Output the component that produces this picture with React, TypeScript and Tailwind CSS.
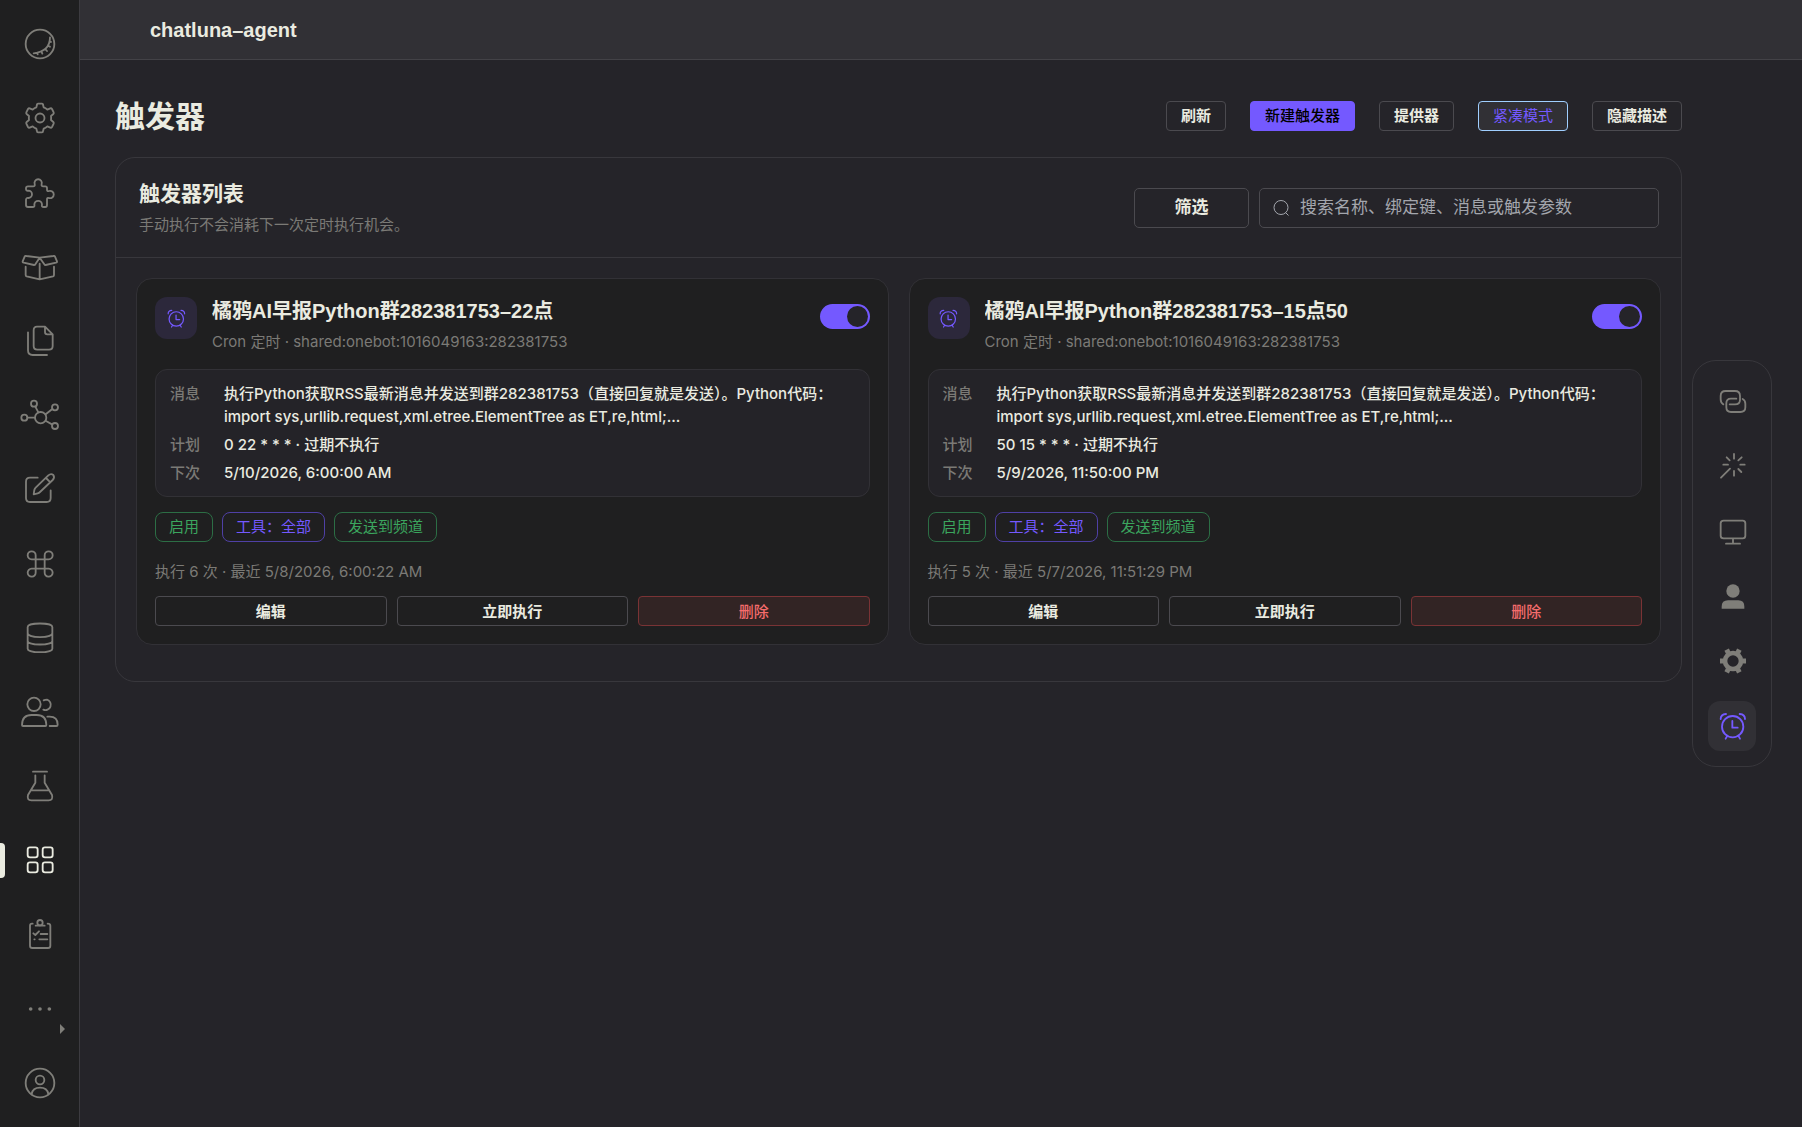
import React from "react";

type Glyph = { name: string; box: string; draw: React.ReactNode };

function Icon({ box, className, children }: { box: string; className: string; children: React.ReactNode }) {
  return (
    <svg
      viewBox={box}
      className={className}
      fill="none"
      stroke="currentColor"
      strokeWidth={5.5}
      strokeLinecap="round"
      strokeLinejoin="round"
      aria-hidden="true"
    >
      {children}
    </svg>
  );
}

const navItems: Glyph[] = [
  {
    name: "主题",
    box: "60 72 120 120",
    draw: (
      <>
        <circle cx="120" cy="132" r="43" />
        <path d="M150 112Q150 154 101 160M149 123L153 126M144 136L150 140M136 147L141 153M124 154L127 161M112 158L113 163" />
      </>
    ),
  },
  {
    name: "设置",
    box: "-60 -60 120 120",
    draw: (
      <>
        <circle r="13.5" />
        <path d="M-6-43H6Q9-43 9-40L11-32Q17-30 22-25L31-29Q34-30 36-27L41-17Q42-14 40-12L33-6Q34 0 33 6L40 12Q42 14 41 17L36 27Q34 30 31 29L22 25Q17 30 11 32L9 40Q9 43 6 43H-6Q-9 43-9 40L-11 32Q-17 30-22 25L-31 29Q-34 30-36 27L-41 17Q-42 14-40 12L-33 6Q-34 0-33-6L-40-12Q-42-14-41-17L-36-27Q-34-30-31-29L-22-25Q-17-30-11-32L-9-40Q-9-43-6-43Z" />
      </>
    ),
  },
  {
    name: "插件",
    box: "60 520 120 120",
    draw: (
      <path d="M84 560H99Q106 560 104 553A11 11 0 1 1 125 553Q123 560 130 560H136Q141 560 141 565V570Q141 576 147 574A11 11 0 1 1 147 595Q141 593 141 599V616Q141 622 136 622H131Q124 622 126 615A11 11 0 1 0 103 615Q105 622 98 622H84Q78 622 78 616V601Q78 594 85 595A11 11 0 1 0 85 573Q78 574 78 568V566Q78 560 84 560Z" />
    ),
  },
  {
    name: "市场",
    box: "60 741 120 120",
    draw: (
      <path d="M79 768L119 773L106 793Q105 795 102 795L71 788Q67 787 68 784L74 770Q75 767 79 768ZM160 768L119 773L133 793Q134 795 137 795L168 788Q172 787 171 784L165 770Q164 767 160 768ZM77 800V825Q77 828 80 829L119 838L159 829Q162 828 162 825V800M119 791V838" />
    ),
  },
  {
    name: "文件",
    box: "60 93 120 120",
    draw: (
      <path d="M111 110H135L158 133V168Q158 179 147 179H112Q101 179 101 168V121Q101 110 111 110ZM135 111V126Q135 133 142 133H157M84 127V181Q84 195 98 195H141" />
    ),
  },
  {
    name: "依赖",
    box: "60 315 120 120",
    draw: (
      <>
        <circle cx="122" cy="383" r="17" />
        <circle cx="102" cy="341" r="9" />
        <circle cx="165" cy="352" r="9" />
        <circle cx="73" cy="383" r="9" />
        <circle cx="165" cy="408" r="9" />
        <path d="M106 350L115 367M157 357L137 373M83 383H104M156 403L138 393" />
      </>
    ),
  },
  {
    name: "编辑器",
    box: "60 540 120 120",
    draw: (
      <path d="M113 566H90Q78 566 78 578V627Q78 639 90 639H140Q152 639 152 627V604M101 616L103 603Q104 599 107 596L145 559Q153 552 160 558Q165 566 158 573L120 609Q117 612 113 613ZM138 567L151 580" />
    ),
  },
  {
    name: "指令",
    box: "60 762 120 120",
    draw: (
      <path d="M107 808H95A12 12 0 1 1 107 796V847A12 12 0 1 1 95 836H146A12 12 0 1 1 134 847V796A12 12 0 1 1 146 808Z" />
    ),
  },
  {
    name: "数据库",
    box: "60 114 120 120",
    draw: (
      <path d="M83 141C83 127 157 127 157 141V206C157 220 83 220 83 206ZM83 160C83 175 157 175 157 160M83 183C83 197 157 197 157 183" />
    ),
  },
  {
    name: "用户",
    box: "60 336 120 120",
    draw: (
      <path d="M122 373A20 20 0 1 1 82 373A20 20 0 1 1 122 373ZM66 435Q66 405 95 405H110Q139 405 139 435Q139 438 136 438H69Q66 438 66 435ZM131 361Q135 359 141 359A16 16 0 1 1 130 389M142 410H149Q173 410 173 434Q173 438 169 438H149" />
    ),
  },
  {
    name: "沙盒",
    box: "60 558 120 120",
    draw: <path d="M99 575H141M106 586V608L84 645Q80 661 94 661H146Q160 661 156 645L134 608V586M93 631H147" />,
  },
  {
    name: "应用",
    box: "60 0 120 120",
    draw: (
      <>
        <rect x="83" y="22" width="30" height="30" rx="7" />
        <rect x="128" y="22" width="30" height="30" rx="7" />
        <rect x="83" y="67" width="30" height="30" rx="7" />
        <rect x="128" y="67" width="30" height="30" rx="7" />
      </>
    ),
  },
  {
    name: "任务",
    box: "60 225 120 120",
    draw: (
      <>
        <circle cx="120" cy="248" r="8" />
        <path d="M98 251H96Q90 251 90 257V317Q90 324 97 324H144Q151 324 151 317V257Q151 251 143 251M107 257H134M100 280L106 285L117 274M122 282H142M103 298H104M118 298H142" />
      </>
    ),
  },
  {
    name: "更多",
    box: "60 447 120 120",
    draw: (
      <g fill="currentColor" stroke="none">
        <circle cx="92" cy="507" r="5.5" />
        <circle cx="120" cy="507" r="5.5" />
        <circle cx="148" cy="507" r="5.5" />
        <path d="M180 552L195 567L180 582Z" />
      </g>
    ),
  },
  {
    name: "账号",
    box: "60 669 120 120",
    draw: (
      <>
        <circle cx="120" cy="729" r="43" />
        <circle cx="120" cy="720" r="13" />
        <path d="M95 762Q98 743 120 743Q142 743 145 762" />
      </>
    ),
  },
];

const alarm = (
  <path d="M190 1130A32 32 0 1 1 126 1130A32 32 0 1 1 190 1130ZM157 1113V1133H173M122 1107Q122 1093 138 1092M179 1092Q195 1093 195 1107M141 1159L137 1166M176 1159L180 1166" />
);

const dockItems: Glyph[] = [
  {
    name: "链接",
    box: "96 93 120 120",
    draw: (
      <path d="M130 163Q122 159 122 148V138Q122 123 137 123H165Q180 123 180 138V149Q180 163 165 163H149M188 147Q196 151 196 161V172Q196 186 181 186H153Q139 186 139 172V160Q139 146 153 146H169" />
    ),
  },
  {
    name: "技能",
    box: "96 288 120 120",
    draw: (
      <path d="M162 312V326M162 363V377M130 344H144M181 344H194M140 322L149 331M185 322L175 331M175 357L184 366M123 383L150 356" />
    ),
  },
  {
    name: "终端",
    box: "96 483 120 120",
    draw: <path d="M131 512H188Q196 512 196 520V557Q196 565 188 565H131Q122 565 122 557V520Q122 512 131 512ZM159 566V580M138 581H180" />,
  },
  {
    name: "角色",
    box: "96 678 120 120",
    draw: (
      <g fill="currentColor" stroke="none">
        <circle cx="159" cy="723" r="20" />
        <path d="M125 776V770Q125 751 144 751H175Q193 751 193 770V776Z" />
      </g>
    ),
  },
  {
    name: "配置",
    box: "-63 -60 120 120",
    draw: (
      <g>
        <circle r="24" strokeWidth={14} />
        <path d="M28 0H39M-28 0H-39M14-24L19-34M-14-24L-19-34M14 24L19 34M-14 24L-19 34" strokeWidth={15} strokeLinecap="butt" />
      </g>
    ),
  },
  { name: "触发器", box: "96 1068 120 120", draw: alarm },
];

const triggers = [
  {
    id: "t22",
    title: "橘鸦AI早报Python群282381753–22点",
    plan: "0 22 * * * · 过期不执行",
    next: "5/10/2026, 6:00:00 AM",
    stats: "执行 6 次 · 最近 5/8/2026, 6:00:22 AM",
  },
  {
    id: "t15",
    title: "橘鸦AI早报Python群282381753–15点50",
    plan: "50 15 * * * · 过期不执行",
    next: "5/9/2026, 11:50:00 PM",
    stats: "执行 5 次 · 最近 5/7/2026, 11:51:29 PM",
  },
];

const titleFont = "font-['Liberation_Sans','Noto_Sans_CJK_SC',sans-serif] text-[20px] font-bold";
const toolbarBtn = "h-[30px] rounded-[4px] border px-[14px] text-[15px] leading-none whitespace-nowrap";
const cardBtn = "h-[30px] flex-1 rounded-[4px] border text-[15px] leading-none";
const tag = "flex h-[30px] items-center rounded-lg border px-[13px] text-[15px]";

function TriggerCard({ t }: { t: (typeof triggers)[number] }) {
  return (
    <article className="min-w-0 rounded-2xl border border-[#323136] bg-[#1f1f20] px-[18px] pt-[18px] pb-[18px]">
      <div className="flex items-start">
        <div className="flex size-[42px] shrink-0 items-center justify-center rounded-xl bg-[#2c283b] text-[#7459ff]">
          <Icon box="99 1068 120 120" className="size-[27px]">
            {alarm}
          </Icon>
        </div>
        <div className="ml-[15px] min-w-0 flex-1">
          <h3 className={titleFont + " truncate leading-[28px]"}>{t.title}</h3>
          <p className="mt-[6px] truncate text-[15px] leading-[22px] text-[#7b7a76]">
            Cron 定时 · shared:onebot:1016049163:282381753
          </p>
        </div>
        <label className="mt-[7px] block h-[25px] w-[50px] shrink-0 cursor-pointer rounded-full bg-[#7459ff] p-[2px]">
          <input type="checkbox" defaultChecked aria-label={"启用 " + t.title} className="peer sr-only" />
          <span className="ml-auto block size-[21px] rounded-full bg-[#252429]" />
        </label>
      </div>

      <dl className="mt-4 grid grid-cols-[54px_1fr] gap-y-[5px] rounded-xl border border-[#323136] bg-[#242328] px-[14px] py-3 text-[15px] leading-[23px] font-medium">
        <dt className="text-[#7b7a76]">消息</dt>
        <dd>执行Python获取RSS最新消息并发送到群282381753（直接回复就是发送）。Python代码：import sys,urllib.request,xml.etree.ElementTree as ET,re,html;...</dd>
        <dt className="text-[#7b7a76]">计划</dt>
        <dd>{t.plan}</dd>
        <dt className="text-[#7b7a76]">下次</dt>
        <dd>{t.next}</dd>
      </dl>

      <div className="mt-[15px] flex gap-[9px]">
        <span className={tag + " border-[#2c6e45] text-[#3ba55e]"}>启用</span>
        <span className={tag + " border-[#4f40a5] text-[#7459ff]"}>工具：全部</span>
        <span className={tag + " border-[#2c6e45] text-[#3ba55e]"}>发送到频道</span>
      </div>

      <p className="mt-[19px] text-[15px] leading-[22px] text-[#7b7a76]">{t.stats}</p>

      <div className="mt-[13px] flex gap-[10px]">
        <button className={cardBtn + " border-[#4b4a4f] font-semibold"}>编辑</button>
        <button className={cardBtn + " border-[#4b4a4f] font-semibold"}>立即执行</button>
        <button className={cardBtn + " border-[#7a3335] bg-[#322424] font-medium text-[#f56c6c]"}>删除</button>
      </div>
    </article>
  );
}

export default function App() {
  return (
    <div className="flex min-h-screen bg-[#252429] font-['Inter','Noto_Sans_CJK_SC',sans-serif] text-[#eaebe0]">
      <nav className="flex w-20 shrink-0 flex-col border-r border-[#3c3b40] bg-[#1f1f20] py-[7px]">
        {navItems.map((item) => {
          const active = item.name === "应用";
          return (
            <a
              key={item.name}
              href="#"
              aria-label={item.name}
              className={"relative flex flex-1 items-center justify-center " + (active ? "text-[#eaebe0]" : "text-[#7f7e79]")}
            >
              {active && <span className="absolute left-0 h-[35px] w-[5px] rounded-r-[4px] bg-[#eaebe0]" />}
              <Icon box={item.box} className="size-10 overflow-visible">
                {item.draw}
              </Icon>
            </a>
          );
        })}
      </nav>

      <div className="flex min-w-0 flex-1 flex-col">
        <header className="flex h-[60px] items-center border-b border-[#434247] bg-[#313035] pl-[70px]">
          <span className={titleFont}>chatluna–agent</span>
        </header>

        <div className="flex flex-1 gap-[10px] pr-[30px] pl-[35px]">
          <main className="min-w-0 flex-1">
            <div className="flex h-[97px] items-center justify-between pt-[14px]">
              <h1 className="text-[30px] leading-[40px] font-semibold">触发器</h1>
              <div className="flex gap-6">
                <button className={toolbarBtn + " border-[#4b4a4f] font-semibold"}>刷新</button>
                <button className={toolbarBtn + " border-[#7459ff] bg-[#7459ff] font-medium text-black"}>新建触发器</button>
                <button className={toolbarBtn + " border-[#4b4a4f] font-semibold"}>提供器</button>
                <button className={toolbarBtn + " border-[#a0cfff] bg-[#313035] text-[#7459ff]"}>紧凑模式</button>
                <button className={toolbarBtn + " border-[#4b4a4f] font-semibold"}>隐藏描述</button>
              </div>
            </div>

            <section className="rounded-[20px] border border-[#38373c]">
              <div className="flex h-[100px] items-center justify-between border-b border-[#38373c] pr-[22px] pl-[23px]">
                <div>
                  <h2 className="text-[21px] leading-[30px] font-semibold">触发器列表</h2>
                  <p className="mt-[5px] text-[15px] leading-[22px] text-[#7b7a76]">手动执行不会消耗下一次定时执行机会。</p>
                </div>
                <div className="flex gap-[10px]">
                  <button className="h-10 w-[115px] rounded-[5px] border border-[#4b4a4f] text-[17px] font-semibold">筛选</button>
                  <label className="flex h-10 w-[400px] items-center rounded-[5px] border border-[#4b4a4f] pl-[13px] text-[#a3a6ad]">
                    <svg viewBox="0 0 16 16" className="size-4" fill="none" stroke="currentColor" aria-hidden="true">
                      <circle cx="8" cy="7.5" r="7" />
                      <path d="M12.5 12.5L15.5 15.5" />
                    </svg>
                    <input
                      aria-label="搜索触发器"
                      placeholder="搜索名称、绑定键、消息或触发参数"
                      className="ml-[11px] min-w-0 flex-1 bg-transparent text-[17px] outline-none placeholder:text-[#a3a6ad]"
                    />
                  </label>
                </div>
              </div>
              <div className="grid grid-cols-2 gap-5 px-5 pt-5 pb-9">
                {triggers.map((t) => (
                  <TriggerCard key={t.id} t={t} />
                ))}
              </div>
            </section>
          </main>

          <aside className="mb-[60px] flex shrink-0 flex-col gap-[15px] self-center rounded-3xl border border-[#38373c] p-[15px]">
            {dockItems.map((item) => {
              const active = item.name === "触发器";
              return (
                <button
                  key={item.name}
                  aria-label={item.name}
                  className={"flex h-[50px] w-12 items-center justify-center rounded-xl " + (active ? "bg-[#313035] text-[#7459ff]" : "text-[#7f7e79]")}
                >
                  <Icon box={item.box} className="size-10">
                    {item.draw}
                  </Icon>
                </button>
              );
            })}
          </aside>
        </div>
      </div>
    </div>
  );
}
